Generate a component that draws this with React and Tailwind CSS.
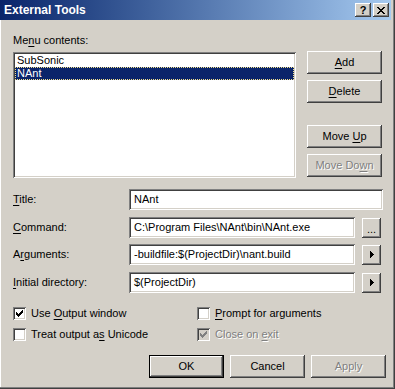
import React from "react";

const raised =
  "shadow-[inset_-1px_-1px_0_#404040,inset_1px_1px_0_#ffffff,inset_-2px_-2px_0_#808080,inset_2px_2px_0_#d4d0c8]";
const sunken =
  "shadow-[inset_1px_1px_0_#808080,inset_-1px_-1px_0_#ffffff,inset_2px_2px_0_#404040,inset_-2px_-2px_0_#d4d0c8]";
const disabledText = "text-[#808080] [text-shadow:1px_1px_0_#ffffff]";

function U({ children }) {
  return <span className="underline underline-offset-[2px]">{children}</span>;
}

function Btn({ children, disabled, className = "", isDefault }) {
  if (isDefault) {
    return (
      <div className={`h-[23px] w-[75px] border border-black bg-[#d4d0c8] shadow-[inset_-1px_-1px_0_#404040,inset_1px_1px_0_#ffffff,inset_-2px_-2px_0_#808080] flex items-center justify-center ${className}`}>
        <span>{children}</span>
      </div>
    );
  }
  return (
    <div
      className={`h-[23px] w-[75px] bg-[#d4d0c8] ${raised} flex items-center justify-center ${
        disabled ? disabledText : ""
      } ${className}`}
    >
      <span>{children}</span>
    </div>
  );
}

function Check({ checked, disabled }) {
  return (
    <div className={`w-[13px] h-[13px] ${sunken} ${disabled ? "bg-[#d4d0c8]" : "bg-white"} flex items-center justify-center shrink-0`}>
      {checked && (
        <svg width="7" height="7" viewBox="0 0 7 7" shapeRendering="crispEdges">
          <g fill={disabled ? "#808080" : "#000000"}>
            <rect x="0" y="2" width="1" height="3" />
            <rect x="1" y="3" width="1" height="3" />
            <rect x="2" y="4" width="1" height="3" />
            <rect x="3" y="3" width="1" height="3" />
            <rect x="4" y="2" width="1" height="3" />
            <rect x="5" y="1" width="1" height="3" />
            <rect x="6" y="0" width="1" height="3" />
          </g>
        </svg>
      )}
    </div>
  );
}

function TextBox({ value, width }) {
  return (
    <div className={`h-[21px] ${width} bg-white ${sunken} flex items-center pl-[5px] whitespace-nowrap overflow-hidden`}>
      <span>{value}</span>
    </div>
  );
}

function SmallBtn({ children }) {
  return (
    <div className={`h-[20px] w-[19px] ml-[7px] bg-[#d4d0c8] ${raised} flex items-center justify-center`}>
      {children}
    </div>
  );
}

function Arrow() {
  return (
    <svg width="4" height="7" viewBox="0 0 4 7" shapeRendering="crispEdges">
      <polygon points="0,0 4,3.5 0,7" fill="#000" />
    </svg>
  );
}

export default function App() {
  return (
    <div className="w-[395px] h-[389px] bg-[#d4d0c8] flex flex-col overflow-hidden text-[11px] leading-[13px] text-black font-['Liberation_Sans',Arial,sans-serif] shadow-[inset_-1px_-1px_0_#404040,inset_-2px_-2px_0_#808080,inset_1px_0_0_#ffffff] select-none">
      {/* Title bar */}
      <div className="h-[20px] mr-[4px] flex items-center bg-gradient-to-r from-[#0a246a] to-[#a6caf0] pl-[4px] pr-[2px]">
        <span className="flex-1 font-bold text-white text-[12px]">External Tools</span>
        <div className={`w-[16px] h-[14px] bg-[#d4d0c8] ${raised} flex items-center justify-center font-bold text-[11px] leading-none`}>
          ?
        </div>
        <div className={`ml-[2px] w-[16px] h-[14px] bg-[#d4d0c8] ${raised} flex items-center justify-center`}>
          <svg width="8" height="7" viewBox="0 0 8 7" shapeRendering="crispEdges">
            <g fill="#000">
              <rect x="0" y="0" width="2" height="1" />
              <rect x="6" y="0" width="2" height="1" />
              <rect x="1" y="1" width="2" height="1" />
              <rect x="5" y="1" width="2" height="1" />
              <rect x="2" y="2" width="4" height="1" />
              <rect x="3" y="3" width="2" height="1" />
              <rect x="2" y="4" width="4" height="1" />
              <rect x="1" y="5" width="2" height="1" />
              <rect x="5" y="5" width="2" height="1" />
              <rect x="0" y="6" width="2" height="1" />
              <rect x="6" y="6" width="2" height="1" />
            </g>
          </svg>
        </div>
      </div>

      <div className="pl-[13px] flex flex-col">
        <div className="mt-[14px] h-[13px]">
          Me<U>n</U>u contents:
        </div>

        {/* List + buttons */}
        <div className="mt-[4px] flex items-start">
          <div className={`mt-[1px] w-[283px] h-[126px] bg-white ${sunken} p-[2px]`}>
            <div className="h-[13px] pl-[2px] flex items-center">SubSonic</div>
            <div className="h-[13px] pl-[2px] flex items-center bg-[#0a246a] text-white outline-1 outline-dotted outline-[#f3e28c] -outline-offset-1">
              NAnt
            </div>
          </div>
          <div className="ml-[11px] flex flex-col">
            <Btn>
              <U>A</U>dd
            </Btn>
            <Btn className="mt-[6px]">
              <U>D</U>elete
            </Btn>
            <Btn className="mt-[22px]">
              Move <U>U</U>p
            </Btn>
            <Btn className="mt-[6px]" disabled>
              Move Do<U>w</U>n
            </Btn>
          </div>
        </div>

        {/* Form rows */}
        <div className="mt-[11px] flex items-center h-[21px]">
          <div className="w-[116px]">
            <U>T</U>itle:
          </div>
          <TextBox value="NAnt" width="w-[254px]" />
        </div>
        <div className="mt-[7px] flex items-center h-[21px]">
          <div className="w-[116px]">
            <U>C</U>ommand:
          </div>
          <TextBox value="C:\Program Files\NAnt\bin\NAnt.exe" width="w-[226px]" />
          <SmallBtn>
            <span className="leading-none mt-[3px]">...</span>
          </SmallBtn>
        </div>
        <div className="mt-[6px] flex items-center h-[21px]">
          <div className="w-[116px]">
            A<U>r</U>guments:
          </div>
          <TextBox value="-buildfile:$(ProjectDir)\nant.build" width="w-[226px]" />
          <SmallBtn>
            <Arrow />
          </SmallBtn>
        </div>
        <div className="mt-[7px] flex items-center h-[21px]">
          <div className="w-[116px]">
            <U>I</U>nitial directory:
          </div>
          <TextBox value="$(ProjectDir)" width="w-[226px]" />
          <SmallBtn>
            <Arrow />
          </SmallBtn>
        </div>

        {/* Checkboxes */}
        <div className="mt-[14px] flex h-[13px]">
          <div className="w-[184px] flex items-center gap-[5px]">
            <Check checked />
            <span>
              Use <U>O</U>utput window
            </span>
          </div>
          <div className="flex items-center gap-[5px]">
            <Check />
            <span>
              <U>P</U>rompt for arguments
            </span>
          </div>
        </div>
        <div className="mt-[8px] flex h-[13px]">
          <div className="w-[184px] flex items-center gap-[5px]">
            <Check />
            <span>
              Treat output a<U>s</U> Unicode
            </span>
          </div>
          <div className="flex items-center gap-[5px]">
            <Check checked disabled />
            <span className={disabledText}>
              Close on <span className="underline underline-offset-[2px]">e</span>xit
            </span>
          </div>
        </div>

        {/* Bottom buttons */}
        <div className="mt-[14px] flex pl-[136px] gap-[6px]">
          <Btn isDefault>OK</Btn>
          <Btn>Cancel</Btn>
          <Btn disabled>Apply</Btn>
        </div>
      </div>
    </div>
  );
}
